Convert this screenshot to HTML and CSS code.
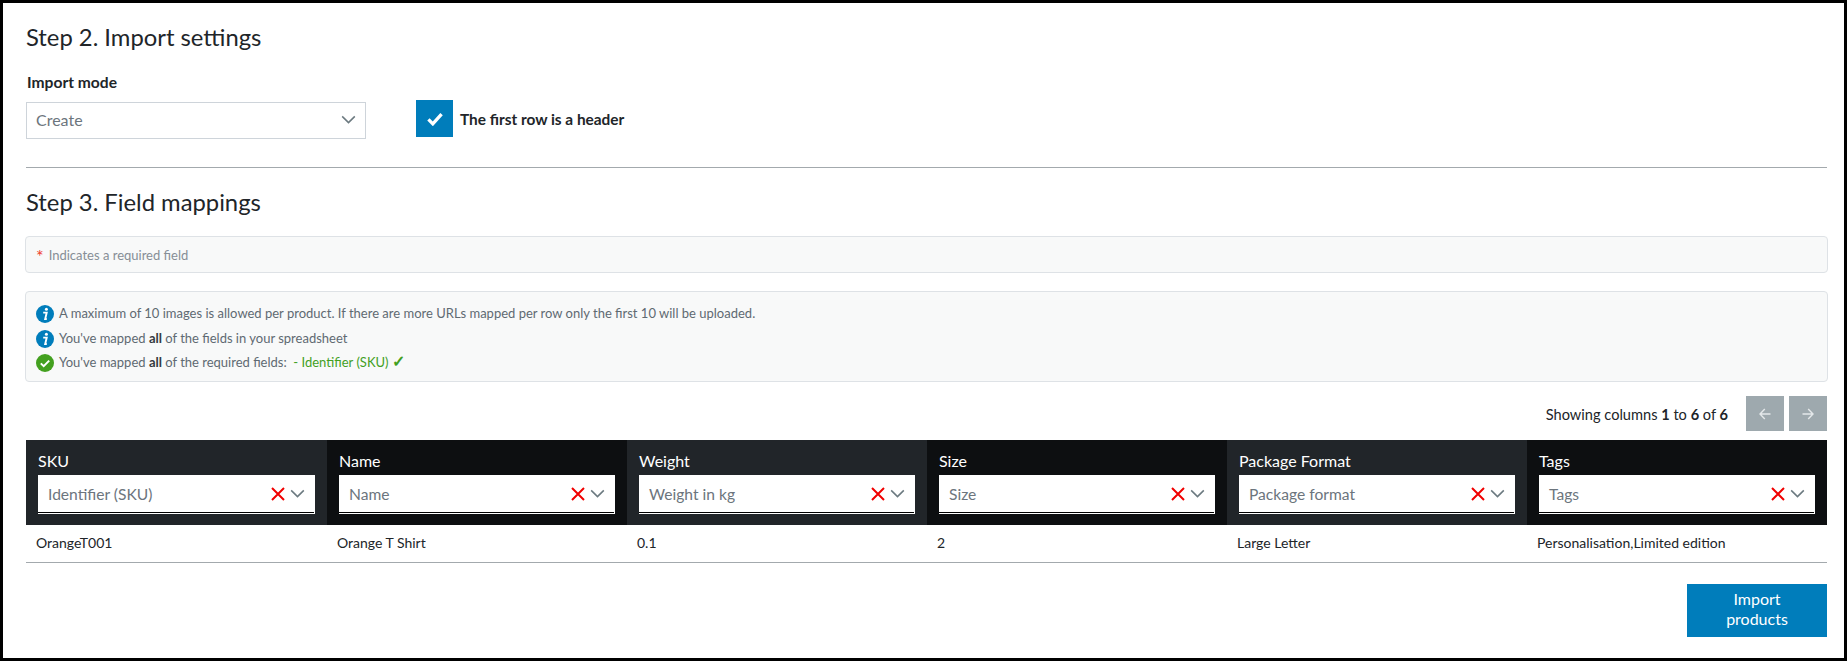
FILE: index.html
```html
<!DOCTYPE html>
<html lang="en">
<head>
<meta charset="utf-8">
<title>Import products</title>
<link rel="stylesheet" href="styles.css">
</head>
<body>
<main class="page">
  <h2 class="step-title">Step 2. Import settings</h2>
  <div class="settings">
    <div class="mode">
      <label class="mode-label">Import mode</label>
      <div class="select">
        <span>Create</span>
        <svg class="chev" viewBox="0 0 16 10"><path d="M1 1.5l7 7 7-7"/></svg>
      </div>
    </div>
    <div class="header-check">
      <span class="checkbox"><svg viewBox="0 0 20 16"><path d="M2.5 8.5l5 5 10-11"/></svg></span>
      <span>The first row is a header</span>
    </div>
  </div>
  <hr class="divider">
  <h2 class="step-title step-three">Step 3. Field mappings</h2>
  <div class="panel required"><span class="star">*</span> Indicates a required field</div>
  <div class="panel notes">
    <div class="note">
      <svg class="note-icon" viewBox="0 0 18 18"><circle cx="9" cy="9" r="9" fill="#007dbb"/><circle cx="10.4" cy="4.2" r="1.5" fill="#fff"/><path d="M7.2 7.6h3.5l-1.5 6.4h1.6" fill="none" stroke="#fff" stroke-width="1.9"/></svg>
      <span>A maximum of 10 images is allowed per product. If there are more URLs mapped per row only the first 10 will be uploaded.</span>
    </div>
    <div class="note">
      <svg class="note-icon" viewBox="0 0 18 18"><circle cx="9" cy="9" r="9" fill="#007dbb"/><circle cx="10.4" cy="4.2" r="1.5" fill="#fff"/><path d="M7.2 7.6h3.5l-1.5 6.4h1.6" fill="none" stroke="#fff" stroke-width="1.9"/></svg>
      <span>You've mapped <b>all</b> of the fields in your spreadsheet</span>
    </div>
    <div class="note">
      <svg class="note-icon" viewBox="0 0 18 18"><circle cx="9" cy="9" r="9" fill="#43a01f"/><path d="M4.8 9.4l2.9 2.8 5.5-5.6" fill="none" stroke="#fff" stroke-width="2"/></svg>
      <span>You've mapped <b>all</b> of the required fields: <span class="ok">&nbsp;- Identifier (SKU) <span class="tick">✓</span></span></span>
    </div>
  </div>
  <div class="pager">
    <span class="pager-text">Showing columns <b>1</b> to <b>6</b> of <b>6</b></span>
    <div class="pager-buttons">
      <button class="page-btn"><svg viewBox="0 0 12 12"><path d="M11.5 6H1M5.8 1L1 6l4.8 5"/></svg></button>
      <button class="page-btn"><svg viewBox="0 0 12 12"><path d="M.5 6H11M6.2 1L11 6l-4.8 5"/></svg></button>
    </div>
  </div>
  <div class="grid">
    <div class="col">
      <div class="col-head dark"><div class="col-name">SKU</div><div class="field"><span class="field-text">Identifier (SKU)</span><svg class="x" viewBox="0 0 14 14"><path d="M1 1l12 12M13 1L1 13"/></svg><svg class="chev" viewBox="0 0 16 10"><path d="M1 1.5l7 7 7-7"/></svg></div></div>
      <div class="cell">OrangeT001</div>
    </div>
    <div class="col">
      <div class="col-head black"><div class="col-name">Name</div><div class="field"><span class="field-text">Name</span><svg class="x" viewBox="0 0 14 14"><path d="M1 1l12 12M13 1L1 13"/></svg><svg class="chev" viewBox="0 0 16 10"><path d="M1 1.5l7 7 7-7"/></svg></div></div>
      <div class="cell">Orange T Shirt</div>
    </div>
    <div class="col">
      <div class="col-head dark"><div class="col-name">Weight</div><div class="field"><span class="field-text">Weight in kg</span><svg class="x" viewBox="0 0 14 14"><path d="M1 1l12 12M13 1L1 13"/></svg><svg class="chev" viewBox="0 0 16 10"><path d="M1 1.5l7 7 7-7"/></svg></div></div>
      <div class="cell">0.1</div>
    </div>
    <div class="col">
      <div class="col-head black"><div class="col-name">Size</div><div class="field"><span class="field-text">Size</span><svg class="x" viewBox="0 0 14 14"><path d="M1 1l12 12M13 1L1 13"/></svg><svg class="chev" viewBox="0 0 16 10"><path d="M1 1.5l7 7 7-7"/></svg></div></div>
      <div class="cell">2</div>
    </div>
    <div class="col">
      <div class="col-head dark"><div class="col-name">Package Format</div><div class="field"><span class="field-text">Package format</span><svg class="x" viewBox="0 0 14 14"><path d="M1 1l12 12M13 1L1 13"/></svg><svg class="chev" viewBox="0 0 16 10"><path d="M1 1.5l7 7 7-7"/></svg></div></div>
      <div class="cell">Large Letter</div>
    </div>
    <div class="col">
      <div class="col-head black"><div class="col-name">Tags</div><div class="field"><span class="field-text">Tags</span><svg class="x" viewBox="0 0 14 14"><path d="M1 1l12 12M13 1L1 13"/></svg><svg class="chev" viewBox="0 0 16 10"><path d="M1 1.5l7 7 7-7"/></svg></div></div>
      <div class="cell">Personalisation,Limited edition</div>
    </div>
  </div>
  <div class="actions"><button class="import-btn">Import products</button></div>
</main>
</body>
</html>
```
FILE: styles.css
```css
* { box-sizing: border-box; }
html, body { margin: 0; padding: 0; background: #fff; }
body { font-family: Lato, "Open Sans", sans-serif; color: #212529; overflow: hidden; }
.page { height: 661px; border: 3px solid #000; padding: 0 17px 0 23px; display: flex; flex-direction: column; }
.step-title { margin: 20px 0 0; font-size: 23.8px; font-weight: 400; line-height: 29px; }
.settings { display: flex; align-items: flex-start; margin-top: 21px; }
.mode { width: 340px; }
.mode-label { display: block; font-size: 15.6px; font-weight: 700; line-height: 19px; padding-left: 1px; height: 19px; }
.select { margin-top: 10px; height: 37px; border: 1px solid #ced4da; display: flex; align-items: center; justify-content: space-between; padding: 0 9px 3px 9px; font-size: 16px; color: #6c757d; }
.chev { width: 15px; height: 9px; fill: none; stroke: #6c7a80; stroke-width: 1.7; flex: none; }
.header-check { display: flex; align-items: center; gap: 7px; margin: 27px 0 0 50px; font-size: 15.4px; font-weight: 700; }
.checkbox { width: 37px; height: 37px; background: #007dbb; display: flex; align-items: center; justify-content: center; }
.checkbox svg { width: 18px; height: 14px; fill: none; stroke: #fff; stroke-width: 3.8; }
.divider { width: 100%; margin: 28px 0 0; border: 0; border-top: 1px solid #a3a9ad; }
.step-three { margin-top: 20px; }
.panel { background: #f8f9f9; border: 1px solid #dee2e6; border-radius: 4px; margin-left: -1px; margin-right: -1px; color: #6c757d; }
.required { margin-top: 19px; height: 37px; display: flex; align-items: center; gap: 5px; padding-left: 10px; font-size: 13px; color: #868e96; }
.star { color: #ef3b2d; font-size: 18px; line-height: 16px; padding-top: 3px; }
.notes { margin-top: 18px; height: 91px; padding: 13px 10px 9px; display: flex; flex-direction: column; justify-content: space-between; font-size: 13px; color: #5f6a72; }
.note { display: flex; align-items: center; gap: 5px; height: 18px; white-space: pre-wrap; }
.note > span { margin-top: -2px; }
.note b { color: #343a40; }
.note-icon { width: 18px; height: 18px; flex: none; }
.ok { color: #43a01f; }
.tick { font-size: 16px; line-height: 14px; font-weight: 700; }
.pager { display: flex; justify-content: flex-end; align-items: center; gap: 18px; margin-top: 14px; height: 35px; font-size: 14.6px; }
.pager-text { padding-top: 2px; }
.pager-buttons { display: flex; gap: 5px; }
.page-btn { width: 38px; height: 35px; border: 0; padding: 0; background: #9ea9ae; display: flex; align-items: center; justify-content: center; }
.page-btn svg { width: 12px; height: 12px; fill: none; stroke: #e4e8ea; stroke-width: 1.4; }
.grid { display: grid; grid-template-columns: 301px repeat(5, 1fr); margin-top: 9px; border-bottom: 1px solid #a3a9ad; }
.col { min-width: 0; }
.col-head { height: 85px; padding: 10px 12px 0; }
.dark { background: #212529; }
.black { background: #0d0f11; }
.col-name { color: #fff; font-size: 16px; font-weight: 400; line-height: 22px; margin-bottom: 3px; }
.field { height: 39px; background: #fff; display: flex; align-items: center; padding: 0 10px 2px 10px; font-size: 15.6px; color: #6c757d; position: relative; }
.field::after { content: ""; position: absolute; left: 0; right: 1px; bottom: 1px; height: 1.5px; background: #000; }
.field-text { flex: 1; }
.x { width: 14px; height: 14px; fill: none; stroke: #f00000; stroke-width: 2; margin-right: 5px; flex: none; }
.cell { height: 37px; display: flex; align-items: center; padding: 0 0 3px 10px; font-size: 14px; color: #212529; }
.actions { display: flex; justify-content: flex-end; margin-top: 21px; }
.import-btn { width: 140px; height: 53px; border: 0; background: #007dbb; color: #fff; font-family: inherit; font-size: 16px; line-height: 20px; padding: 0 30px 3px; }
```
